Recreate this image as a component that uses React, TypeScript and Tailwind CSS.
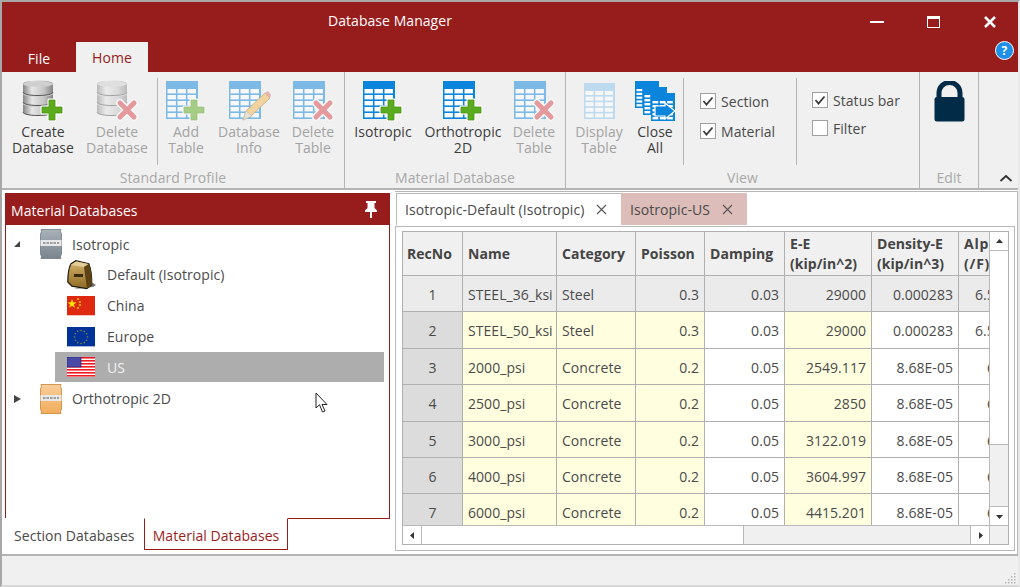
import React from "react";

function TableShape({ x = 2, y = 1, w = 32, h = 38, c = "#0b85dc" }: { x?: number; y?: number; w?: number; h?: number; c?: string }) {
  const cols = [0, 1, 2].map((i) => x + 1.5 + (i * (w - 2)) / 3);
  const rowsN = 5;
  const top = y + 7;
  const rowH = (h - 8) / rowsN;
  return (
    <g>
      <rect x={x} y={y} width={w} height={h} fill={c} />
      {[0, 1, 2, 3, 4].map((r) =>
        cols.map((cx, i) => (
          <rect key={r + "-" + i} x={cx} y={top + r * rowH + 1} width={(w - 2) / 3 - 1.6} height={rowH - 1.6} fill="#fff" />
        ))
      )}
    </g>
  );
}

function Plus({ x = 20, y = 19 }: { x?: number; y?: number }) {
  return (
    <g transform={`translate(${x} ${y})`}>
      <path d="M8 1h6v7h7v6h-7v7H8v-7H1V8h7z" fill="#fff" stroke="#fff" strokeWidth="3" strokeLinejoin="round" />
      <path d="M8 1h6v7h7v6h-7v7H8v-7H1V8h7z" fill="#5cab1e" stroke="#4b9412" strokeWidth="0.8" strokeLinejoin="round" />
    </g>
  );
}

function Cross({ x = 22, y = 20 }: { x?: number; y?: number }) {
  return (
    <g transform={`translate(${x} ${y})`}>
      <path d="M3 3l14 14M17 3L3 17" stroke="#fff" strokeWidth="8" strokeLinecap="round" />
      <path d="M3 3l14 14M17 3L3 17" stroke="#d9474a" strokeWidth="5" strokeLinecap="round" />
    </g>
  );
}

function DbShape() {
  const seg = (y: number) => (
    <g key={y}>
      <path d={`M2 ${y + 3}c0-2 6-3.500 15-3.500s15 1.500 15 3.500v8c0 2-6 3.500-15 3.500S2 ${y + 13} 2 ${y + 11}z`} fill="url(#dbg)" />
      <ellipse cx="17" cy={y + 3} rx="15" ry="2.800" fill="#cfcfcf" />
      <path d={`M2 ${y + 11}c0 2 6 3.500 15 3.500s15-1.500 15-3.500`} fill="none" stroke="#555" strokeWidth="1" />
    </g>
  );
  return <g>{[1, 11, 21].reverse().map(seg)}</g>;
}

function Icon({ children }: { children: React.ReactNode }) {
  return (
    <svg width="44" height="42" viewBox="0 0 44 42" className="block">
      <defs>
        <linearGradient id="dbg" x1="0" x2="1" y1="0" y2="0">
          <stop offset="0" stopColor="#858585" />
          <stop offset="0.3" stopColor="#e6e6e6" />
          <stop offset="0.7" stopColor="#c4c4c4" />
          <stop offset="1" stopColor="#858585" />
        </linearGradient>
      </defs>
      {children}
    </svg>
  );
}

function RibbonButton({ w, lines, disabled, children }: { w: string; lines: string[]; disabled?: boolean; children: React.ReactNode }) {
  return (
    <div className={`${w} flex flex-col items-center pt-2 shrink-0`}>
      <div className={disabled ? "opacity-50" : ""}>{children}</div>
      <div className={`mt-[2px] text-center text-[14px] leading-[16px] ${disabled ? "text-[#a3a3a3]" : "text-[#3d3d3d]"}`}>
        {lines.map((l) => (
          <div key={l} className="whitespace-nowrap">{l}</div>
        ))}
      </div>
    </div>
  );
}

function Group({ w, label, children }: { w: string; label: string; children: React.ReactNode }) {
  return (
    <div className={`${w} shrink-0 h-full flex flex-col border-r border-[#b4b4b4]`}>
      <div className="flex h-[94px]">{children}</div>
      <div className="flex-1 flex items-center justify-center text-[14px] text-[#a8a8a8] pt-[2px]">{label}</div>
    </div>
  );
}

function Sep({ ml }: { ml: string }) {
  return <div className={`${ml} w-px h-[87px] mt-[6px] bg-[#b4b4b4] shrink-0`} />;
}

function Check({ label, checked }: { label: string; checked?: boolean }) {
  return (
    <div className="flex items-center gap-[5px] h-[16px]">
      <div className="w-[16px] h-[16px] bg-white border border-[#a0a0a0] shrink-0">
        {checked && (
          <svg viewBox="0 0 14 14" className="block w-[14px] h-[14px]">
            <path d="M2.500 7l3 3.500 6-7" fill="none" stroke="#3a3a3a" strokeWidth="1.800" />
          </svg>
        )}
      </div>
      <span className="text-[14px] text-[#4a4a4a]">{label}</span>
    </div>
  );
}

function Bag({ id, top, bottom, edge }: { id: string; top: string; bottom: string; edge: string }) {
  return (
    <svg width="22" height="30" viewBox="0 0 22 30" className="block shrink-0">
      <defs>
        <linearGradient id={id} x1="0" x2="0" y1="0" y2="1">
          <stop offset="0" stopColor={top} />
          <stop offset="1" stopColor={bottom} />
        </linearGradient>
      </defs>
      <path d="M1 0.500h20l-.500 2 1 2.500v20l-1 2.500.500 2H1l.500-2-1-2.500V5l1-2.500z" fill={`url(#${id})`} stroke={edge} strokeWidth="0.800" />
      <rect x="0.500" y="11" width="21" height="6" fill="#e8e8e8" />
      <path d="M3 14h16" stroke="#555" strokeWidth="1.200" strokeDasharray="2.500 1" />
    </svg>
  );
}

function Arrow({ open }: { open?: boolean }) {
  return (
    <svg width="10" height="10" viewBox="0 0 10 10" className="block shrink-0">
      {open ? <path d="M8 2v6H2z" fill="#444" /> : <path d="M2 1l7 4-7 4z" fill="#444" />}
    </svg>
  );
}

function China() {
  return (
    <svg width="28" height="20" viewBox="0 0 28 20" className="block">
      <rect width="28" height="20" fill="#de2910" />
      <rect y="19" width="28" height="1" fill="#f4c4bc" />
      <path d="M5 3l1.200 3.300 3.400.1-2.700 2 1 3.300L5 9.700l-2.900 2 1-3.300-2.700-2 3.400-.1z" fill="#ffde00" />
      <circle cx="11" cy="3" r="0.900" fill="#ffde00" />
      <circle cx="13" cy="6" r="0.900" fill="#ffde00" />
      <circle cx="13" cy="9" r="0.900" fill="#ffde00" />
      <circle cx="11" cy="12" r="0.900" fill="#ffde00" />
    </svg>
  );
}

function Europe() {
  const stars = Array.from({ length: 12 }, (_, i) => {
    const a = (i * Math.PI) / 6;
    return <circle key={i} cx={14 + 6.500 * Math.cos(a)} cy={10 + 6.500 * Math.sin(a)} r="0.800" fill="#8d8a3a" />;
  });
  return (
    <svg width="28" height="20" viewBox="0 0 28 20" className="block">
      <rect width="28" height="20" fill="#003399" />
      <rect y="19" width="28" height="1" fill="#a8b8dc" />
      {stars}
    </svg>
  );
}

function Usa() {
  return (
    <svg width="28" height="20" viewBox="0 0 28 20" className="block">
      <rect width="28" height="20" fill="#fff" />
      {[0, 3, 6, 9, 12, 15, 18].map((y) => (
        <rect key={y} y={y} width="28" height="1.600" fill="#f01a24" />
      ))}
      <rect width="14" height="10" fill="#4a4aa6" stroke="#14147a" strokeWidth="0.600" />
    </svg>
  );
}

function BrownBag() {
  return (
    <svg width="29" height="30" viewBox="0 0 29 30" className="block">
      <defs>
        <linearGradient id="brown" x1="0" x2="0" y1="0" y2="1">
          <stop offset="0" stopColor="#d6b46c" />
          <stop offset="1" stopColor="#8f6a24" />
        </linearGradient>
      </defs>
      <path d="M7 29l19-2 3-2-3-2z" fill="#777" />
      <path d="M0.800 22c0-8 1-14 3-18l5-3.300 13 3c2 5 3 13 3 21l-5 4-15-2.500z" fill="url(#brown)" stroke="#1e1a0e" strokeWidth="1.200" />
      <path d="M3.500 5l6-3.500 12 2.500-5 3z" fill="#e3cc98" />
      <path d="M17 7l5-3c2 5 3 13 3 21l-5 4z" fill="#5c4214" />
      <rect x="7" y="14" width="9" height="3" fill="#3a2a10" />
    </svg>
  );
}

function ScrollBtn({ dir, cls }: { dir: "up" | "down" | "left" | "right"; cls: string }) {
  const d = { up: "M1 6l3.500-4L8 6z", down: "M1 3l3.500 4L8 3z", left: "M6 1L2 4.500 6 8z", right: "M3 1l4 3.500L3 8z" }[dir];
  return (
    <div className={`${cls} w-[19px] h-[19px] bg-white border-[#b8b8b8] flex items-center justify-center shrink-0`}>
      <svg width="9" height="9" viewBox="0 0 9 9"><path d={d} fill="#333" /></svg>
    </div>
  );
}

const rows = [
  { h: "h-[36px]", n: "1", name: "STEEL_36_ksi", cat: "Steel", p: "0.3", d: "0.03", e: "29000", den: "0.000283", a: "6.5E-06", ml: "ml-[16px]" },
  { h: "h-[37px]", n: "2", name: "STEEL_50_ksi", cat: "Steel", p: "0.3", d: "0.03", e: "29000", den: "0.000283", a: "6.5E-06", ml: "ml-[16px]" },
  { h: "h-[36px]", n: "3", name: "2000_psi", cat: "Concrete", p: "0.2", d: "0.05", e: "2549.117", den: "8.68E-05", a: "6E-06", ml: "ml-[28px]" },
  { h: "h-[37px]", n: "4", name: "2500_psi", cat: "Concrete", p: "0.2", d: "0.05", e: "2850", den: "8.68E-05", a: "6E-06", ml: "ml-[28px]" },
  { h: "h-[36px]", n: "5", name: "3000_psi", cat: "Concrete", p: "0.2", d: "0.05", e: "3122.019", den: "8.68E-05", a: "6E-06", ml: "ml-[28px]" },
  { h: "h-[36px]", n: "6", name: "4000_psi", cat: "Concrete", p: "0.2", d: "0.05", e: "3604.997", den: "8.68E-05", a: "6E-06", ml: "ml-[28px]" },
  { h: "h-[37px]", n: "7", name: "6000_psi", cat: "Concrete", p: "0.2", d: "0.05", e: "4415.201", den: "8.68E-05", a: "6E-06", ml: "ml-[28px]" },
];

const colW = ["w-[60px]", "w-[94px]", "w-[79px]", "w-[69px]", "w-[80px]", "w-[87px]", "w-[87px]", "w-[40px]"];

function Cell({ i, cls, children }: { i: number; cls: string; children: React.ReactNode }) {
  return <div className={`${colW[i]} shrink-0 h-full border-r border-b border-[#b0b0b0] flex items-center overflow-hidden whitespace-nowrap ${cls}`}>{children}</div>;
}

function TreeRow({ children, cls = "" }: { children: React.ReactNode; cls?: string }) {
  return <div className={`flex items-center ${cls}`}>{children}</div>;
}

export default function App() {
  const font = "font-['Open_Sans','Noto_Sans',sans-serif]";
  return (
    <div className={`${font} tracking-[0.05px] relative w-[1020px] h-[587px] overflow-hidden bg-[#f0f0f0] border-t-2 border-l-2 border-r-2 border-b-2 border-t-[#a8a8a8] border-l-[#a8a8a8] border-r-[#e8e8e8] border-b-[#d8d8d8] flex flex-col`}>
      {/* title */}
      <div className="h-[40px] bg-[#971c1c] flex items-center shrink-0">
        <div className="ml-[326px] pb-[4px] text-[14px] text-white whitespace-nowrap">Database Manager</div>
        <div className="ml-auto flex items-center">
          <div className="w-[14px] h-[2px] bg-white mr-[43px]" />
          <div className="w-[13px] h-[12px] border border-white border-t-[3px] mr-[43px]" />
          <svg width="14" height="14" viewBox="0 0 14 14" className="mr-[21px] block">
            <path d="M2 2l10 10M12 2L2 12" stroke="#fff" strokeWidth="2.500" />
          </svg>
        </div>
      </div>
      {/* ribbon tabs */}
      <div className="h-[30px] bg-[#971c1c] flex items-end shrink-0">
        <div className="w-[74px] h-[30px] flex items-center justify-center text-[14px] text-white pt-[2px]">File</div>
        <div className="w-[72px] h-[30px] bg-[#f0f0f0] flex items-center justify-center text-[14px] text-[#971c1c]">Home</div>
        <div className="ml-auto mr-[4px] mb-[12px] w-[19px] h-[19px] rounded-full bg-[#1e90e8] border border-white flex items-center justify-center text-white text-[12px] font-bold leading-none">?</div>
      </div>
      {/* ribbon */}
      <div className="h-[116px] flex shrink-0 bg-[#f0f0f0] relative">
        <Group w="w-[343px]" label="Standard Profile">
          <RibbonButton w="w-[82px]" lines={["Create", "Database"]}>
            <Icon><DbShape /><Plus /></Icon>
          </RibbonButton>
          <RibbonButton w="w-[66px]" lines={["Delete", "Database"]} disabled>
            <Icon><DbShape /><Cross /></Icon>
          </RibbonButton>
          <Sep ml="ml-[7px]" />
          <RibbonButton w="w-[56px]" lines={["Add", "Table"]} disabled>
            <Icon><TableShape /><Plus x={19} /></Icon>
          </RibbonButton>
          <RibbonButton w="w-[70px]" lines={["Database", "Info"]} disabled>
            <Icon>
              <TableShape />
              <path d="M16 40l3-9 19-18 5 5-19 18z" fill="#f0b84c" stroke="#8a6a2a" strokeWidth="0.800" />
              <path d="M38 13l5 5 1-3-3-4z" fill="#d77" />
              <path d="M16 40l3-9 6 5z" fill="#e8d8b8" stroke="#777" strokeWidth="0.500" />
            </Icon>
          </RibbonButton>
          <RibbonButton w="w-[58px]" lines={["Delete", "Table"]} disabled>
            <Icon><TableShape /><Cross /></Icon>
          </RibbonButton>
        </Group>
        <Group w="w-[221px]" label="Material Database">
          <RibbonButton w="w-[76px]" lines={["Isotropic"]}>
            <Icon><TableShape /><Plus x={19} /></Icon>
          </RibbonButton>
          <RibbonButton w="w-[84px]" lines={["Orthotropic", "2D"]}>
            <Icon><TableShape /><Plus x={19} /></Icon>
          </RibbonButton>
          <RibbonButton w="w-[58px]" lines={["Delete", "Table"]} disabled>
            <Icon><TableShape /><Cross /></Icon>
          </RibbonButton>
        </Group>
        <Group w="w-[354px]" label="View">
          <RibbonButton w="w-[66px]" lines={["Display", "Table"]} disabled>
            <Icon>
              <TableShape x={7} y={3} w={31} h={36} c="#8cc6ef" />
            </Icon>
          </RibbonButton>
          <RibbonButton w="w-[46px]" lines={["Close", "All"]}>
            <Icon>
              <TableShape x={2} y={1} w={24} h={27} />
              <TableShape x={10} y={7} w={24} h={28} />
              <TableShape x={18} y={13} w={24} h={28} />
              <path d="M22 26h10v-3l10 8-10 8v-3H22z" fill="#0b85dc" stroke="#fff" strokeWidth="1.200" />
            </Icon>
          </RibbonButton>
          <Sep ml="ml-[5px]" />
          <div className="ml-[16px] pt-[21px] flex flex-col gap-[14px] w-[96px] shrink-0">
            <Check label="Section" checked />
            <Check label="Material" checked />
          </div>
          <Sep ml="ml-0" />
          <div className="ml-[15px] pt-[20px] flex flex-col gap-[12px]">
            <Check label="Status bar" checked />
            <Check label="Filter" />
          </div>
        </Group>
        <Group w="w-[59px]" label="Edit">
          <div className="w-full flex justify-center pt-[9px]">
            <svg width="31" height="41" viewBox="0 0 31 41" className="block">
              <path d="M5 18v-6a10.500 10.500 0 0 1 21 0v6" fill="none" stroke="#012b46" strokeWidth="5" />
              <rect x="0.500" y="16" width="30" height="24.500" rx="2.500" fill="#012b46" />
            </svg>
          </div>
        </Group>
        <div className="flex-1 flex items-end justify-end pr-[5px] pb-[6px]">
          <svg width="14" height="8" viewBox="0 0 14 8" className="block">
            <path d="M1.500 7l5.500-5 5.500 5" fill="none" stroke="#333" strokeWidth="1.800" />
          </svg>
        </div>
      </div>
      <div className="h-[2px] bg-[#b4b4b4] shrink-0" />
      {/* main */}
      <div className="h-[364px] bg-white flex shrink-0 overflow-hidden">
        {/* left */}
        <div className="w-[393px] shrink-0 pl-[3px] pt-[3px] flex flex-col">
          <div className="w-[385px] h-[326px] border border-[#971c1c] flex flex-col shrink-0">
            <div className="h-[32px] -mt-px -mx-px bg-[#971c1c] text-white text-[14px] flex items-center justify-between pl-[6px] pr-[11px] shrink-0">
              <span className="pt-[2px]">Material Databases</span>
              <svg width="16" height="17" viewBox="0 0 16 17" className="block">
                <path d="M3 0h10v2h-1.500v5L14 9.500V11H9v6H7v-6H2V9.500L4.500 7V2H3z" fill="#fff" />
              </svg>
            </div>
            <div className="flex flex-col text-[14px] text-[#4a4a4a]">
              <TreeRow cls="h-[30px] mt-[4px]">
                <div className="ml-[6px] w-[28px]"><Arrow open /></div>
                <Bag id="bagGray" top="#a9b2b9" bottom="#7a848d" edge="#6f7a84" />
                <span className="ml-[10px]">Isotropic</span>
              </TreeRow>
              <TreeRow cls="h-[31px] ml-[61px]"><BrownBag /><span className="ml-[11px]">Default (Isotropic)</span></TreeRow>
              <TreeRow cls="h-[31px] ml-[61px]"><China /><span className="ml-[12px]">China</span></TreeRow>
              <TreeRow cls="h-[31px] ml-[61px]"><Europe /><span className="ml-[12px]">Europe</span></TreeRow>
              <TreeRow cls="h-[30px] ml-[49px] mr-[5px] bg-[#adadad] text-[#f2f2f2] pl-[12px]"><Usa /><span className="ml-[12px]">US</span></TreeRow>
              <TreeRow cls="h-[31px] mt-[1px]">
                <div className="ml-[6px] w-[28px]"><Arrow /></div>
                <Bag id="bagOrange" top="#f8cd9b" bottom="#f2ad5c" edge="#c98432" />
                <span className="ml-[10px]">Orthotropic 2D</span>
              </TreeRow>
            </div>
          </div>
          <div className="flex h-[32px] text-[14px] -mt-px">
            <div className="w-[139px] pl-[9px] pt-[6px] text-[#4a4a4a] border-t border-white whitespace-nowrap">Section Databases</div>
            <div className="w-[144px] border-x border-b border-[#971c1c] border-t border-t-white bg-white flex items-center justify-center pt-[2px] text-[#971c1c] whitespace-nowrap">Material Databases</div>
          </div>
        </div>
        {/* right */}
        <div className="flex-1 flex flex-col border-t border-r border-[#b8b8b8] pt-[1px] mt-px">
          <div className="flex h-[32px] ml-px shrink-0 text-[14px] text-[#4a4a4a]">
            <div className="w-[225px] flex items-center pl-[8px] gap-[12px] bg-white border-l border-t border-[#b8b8b8] whitespace-nowrap">
              <span>Isotropic-Default (Isotropic)</span>
              <svg width="11" height="11" viewBox="0 0 11 11" className="shrink-0"><path d="M1 1l9 9M10 1l-9 9" stroke="#555" strokeWidth="1.100" /></svg>
            </div>
            <div className="w-[126px] flex items-center pl-[9px] gap-[12px] bg-[#dcbdb9] whitespace-nowrap">
              <span>Isotropic-US</span>
              <svg width="11" height="11" viewBox="0 0 11 11" className="shrink-0"><path d="M1 1l9 9M10 1l-9 9" stroke="#555" strokeWidth="1.100" /></svg>
            </div>
          </div>
          <div className="mt-px w-[620px] h-[325px] border border-[#b8b8b8] pl-[6px] pt-[4px] pr-[4px] pb-[5px]">
            {/* grid */}
            <div className="w-[607px] h-[314px] border border-[#b0b0b0] flex flex-col text-[14px] text-[#4a4a4a]">
              <div className="flex h-[293px]">
                <div className="w-[586px] overflow-hidden shrink-0">
                  <div className="flex h-[44px] bg-[#f0f0f0] font-bold text-[#444] leading-[20px]">
                    <Cell i={0} cls="pl-[4px]">RecNo</Cell>
                    <Cell i={1} cls="pl-[5px]">Name</Cell>
                    <Cell i={2} cls="pl-[5px]">Category</Cell>
                    <Cell i={3} cls="pl-[5px]">Poisson</Cell>
                    <Cell i={4} cls="pl-[5px]">Damping</Cell>
                    <Cell i={5} cls="pl-[5px]"><div>E-E<br />(kip/in^2)</div></Cell>
                    <Cell i={6} cls="pl-[5px]"><div>Density-E<br />(kip/in^3)</div></Cell>
                    <Cell i={7} cls="pl-[5px]"><div className="tracking-[0.8px]">Alpha<br />(/F)</div></Cell>
                  </div>
                  {rows.map((r, idx) => {
                    const first = idx === 0;
                    const yel = first ? "bg-[#ebebeb]" : "bg-[#ffffe0]";
                    const plain = first ? "bg-[#ebebeb]" : "bg-white";
                    return (
                      <div key={r.n} className={`flex ${r.h}`}>
                        <Cell i={0} cls={`pt-px justify-center ${first ? "bg-[#ebebeb]" : "bg-[#dcdcdc]"}`}>{r.n}</Cell>
                        <Cell i={1} cls={`pt-px pl-[5px] ${yel}`}>{r.name}</Cell>
                        <Cell i={2} cls={`pt-px pl-[5px] ${yel}`}>{r.cat}</Cell>
                        <Cell i={3} cls={`pt-px justify-end pr-[5px] ${yel}`}>{r.p}</Cell>
                        <Cell i={4} cls={`pt-px justify-end pr-[5px] ${plain}`}>{r.d}</Cell>
                        <Cell i={5} cls={`pt-px justify-end pr-[5px] ${yel}`}>{r.e}</Cell>
                        <Cell i={6} cls={`pt-px justify-end pr-[5px] ${plain}`}>{r.den}</Cell>
                        <Cell i={7} cls={`pt-px ${plain}`}><span className={r.ml}>{r.a}</span></Cell>
                      </div>
                    );
                  })}
                </div>
                <div className="w-[19px] flex flex-col border-l border-[#b8b8b8] bg-[#f0f0f0] shrink-0">
                  <ScrollBtn dir="up" cls="border-b !w-full" />
                  <div className="h-[194px] bg-white border-b border-[#b8b8b8]" />
                  <div className="flex-1" />
                  <ScrollBtn dir="down" cls="border-t !w-full" />
                </div>
              </div>
              <div className="flex h-[19px] border-t border-[#b8b8b8] bg-[#f0f0f0]">
                <ScrollBtn dir="left" cls="border-r !h-full" />
                <div className="w-[322px] bg-white border-r border-[#b8b8b8]" />
                <div className="flex-1" />
                <ScrollBtn dir="right" cls="border-l !h-full" />
                <div className="w-[19px] border-l border-[#b8b8b8]" />
              </div>
            </div>
          </div>
        </div>
      </div>
      <div className="h-[2px] bg-[#b4b4b4] shrink-0" />
      <div className="flex-1 bg-[#f0f0f0] flex items-end justify-end pr-[2px] pb-[1px]">
        <svg width="12" height="12" viewBox="0 0 12 12" className="block">
          {[[10, 2], [10, 5], [7, 5], [10, 8], [7, 8], [4, 8], [10, 11], [7, 11], [4, 11], [1, 11]].map(([x, y]) => (
            <rect key={x + "-" + y} x={x} y={y - 1} width="1.500" height="1.500" fill="#b8b8b8" />
          ))}
        </svg>
      </div>
      {/* mouse cursor */}
      <svg width="14" height="21" viewBox="0 0 14 21" className="absolute left-[313px] top-[390px] block">
        <path d="M1 1v15l3.500-3.300L7.500 20l2.500-1-3-6.500h5z" fill="#fff" stroke="#222" strokeWidth="1" />
      </svg>
    </div>
  );
}
